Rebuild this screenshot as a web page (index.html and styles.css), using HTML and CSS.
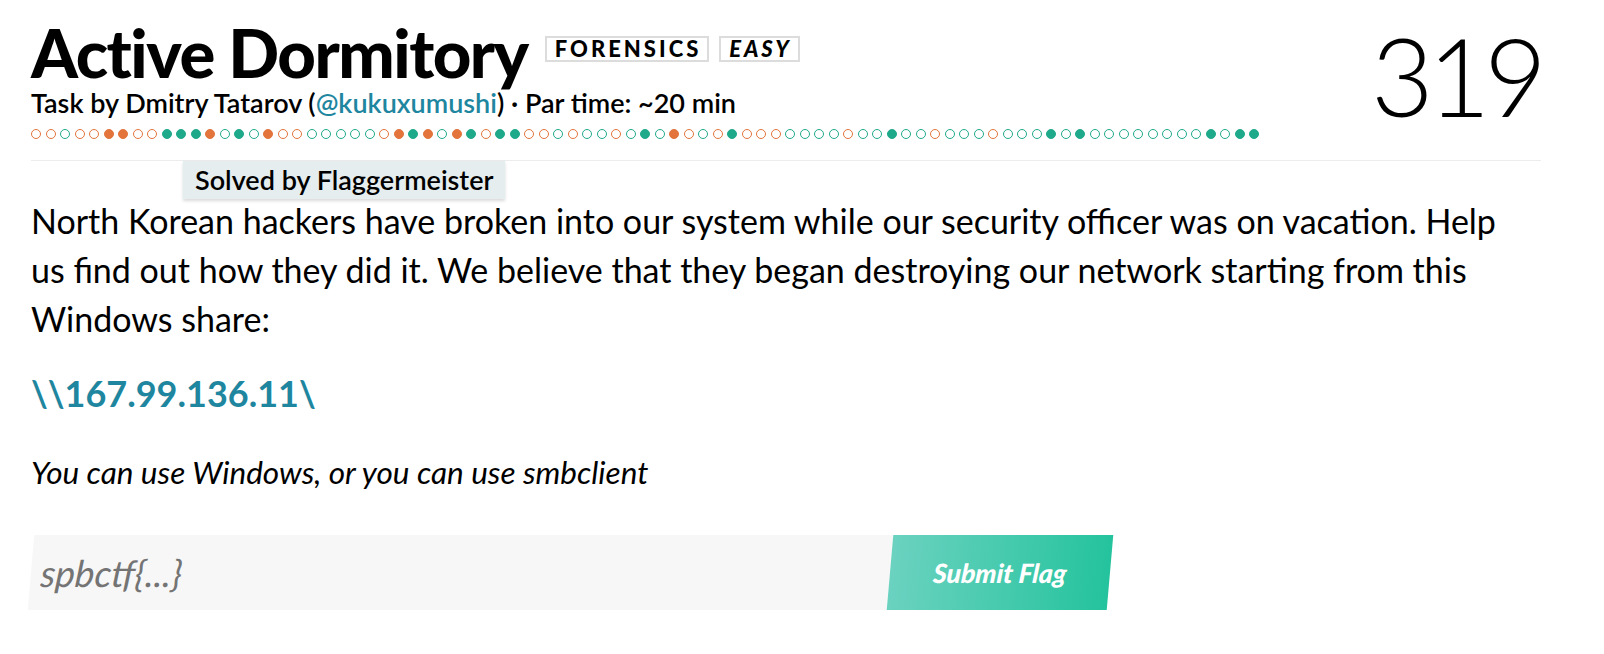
FILE: index.html
```html
<!DOCTYPE html>
<html lang="en">
<head>
<meta charset="utf-8">
<title>Active Dormitory</title>
<link rel="stylesheet" href="styles.css">
</head>
<body>
<div class="page">
  <header class="header">
    <div class="head-main">
      <div class="title-row">
        <h1 class="title">Active Dormitory</h1>
        <span class="tag">FORENSICS</span>
        <span class="tag tag-italic">EASY</span>
      </div>
      <div class="byline">Task by Dmitry Tatarov (<a class="link" href="#">@kukuxumushi</a>) · Par time: ~20 min</div>
      <div class="dots">
        <span class="d o"></span><span class="d o"></span><span class="d t"></span><span class="d o"></span><span class="d o"></span><span class="d O"></span><span class="d O"></span><span class="d o"></span><span class="d o"></span><span class="d T"></span>
        <span class="d T"></span><span class="d T"></span><span class="d O"></span><span class="d t"></span><span class="d T"></span><span class="d t"></span><span class="d O"></span><span class="d o"></span><span class="d o"></span><span class="d t"></span>
        <span class="d t"></span><span class="d t"></span><span class="d t"></span><span class="d t"></span><span class="d o"></span><span class="d O"></span><span class="d T"></span><span class="d O"></span><span class="d t"></span><span class="d O"></span>
        <span class="d T"></span><span class="d o"></span><span class="d T"></span><span class="d T"></span><span class="d o"></span><span class="d o"></span><span class="d t"></span><span class="d o"></span><span class="d t"></span><span class="d t"></span>
        <span class="d o"></span><span class="d t"></span><span class="d T"></span><span class="d t"></span><span class="d O"></span><span class="d o"></span><span class="d t"></span><span class="d o"></span><span class="d T"></span><span class="d o"></span>
        <span class="d o"></span><span class="d o"></span><span class="d t"></span><span class="d t"></span><span class="d t"></span><span class="d t"></span><span class="d o"></span><span class="d t"></span><span class="d t"></span><span class="d T"></span>
        <span class="d t"></span><span class="d t"></span><span class="d o"></span><span class="d t"></span><span class="d t"></span><span class="d t"></span><span class="d o"></span><span class="d t"></span><span class="d t"></span><span class="d t"></span>
        <span class="d T"></span><span class="d t"></span><span class="d T"></span><span class="d t"></span><span class="d t"></span><span class="d t"></span><span class="d t"></span><span class="d t"></span><span class="d t"></span><span class="d t"></span>
        <span class="d t"></span><span class="d T"></span><span class="d t"></span><span class="d T"></span><span class="d T"></span>
      </div>
    </div>
    <div class="points">319</div>
  </header>
  <div class="rule-wrap">
    <hr class="rule">
    <div class="tooltip">Solved by Flaggermeister</div>
  </div>
  <main class="content">
    <p class="desc">North Korean hackers have broken into our system while our security officer was on vacation. Help us find out how they did it. We believe that they began destroying our network starting from this Windows share:</p>
    <p class="share"><a class="link" href="#">\\167.99.136.11\</a></p>
    <p class="hint">You can use Windows, or you can use smbclient</p>
    <form class="flag-form">
      <input class="flag-input" type="text" placeholder="spbctf{...}">
      <button class="flag-btn" type="button">Submit Flag</button>
    </form>
  </main>
</div>
</body>
</html>
```
FILE: styles.css
```css
* { box-sizing: border-box; }
html, body { margin: 0; padding: 0; background: #fff; }
body { font-family: "Lato", "Liberation Sans", sans-serif; color: #000; }

.page { padding: 19px 63px 0 31px; }

.header { display: flex; justify-content: space-between; align-items: flex-start; }
.head-main { display: flex; flex-direction: column; }

.title-row { display: flex; align-items: flex-start; gap: 10px; }
.title { margin: 0 7px 0 0; font-size: 67px; font-weight: 900; line-height: 66px; letter-spacing: -1.5px; }
.tag {
  margin-top: 17px;
  border: 2px solid #dcdcdc;
  padding: 0 6px 0 8px;
  height: 26px;
  line-height: 22px;
  font-size: 22px;
  font-weight: 900;
  letter-spacing: 3px;
}
.tag-italic { font-style: italic; }

.byline { font-size: 27px; font-weight: 600; line-height: 28px; margin-top: 4px; }
.link { color: #1f86a0; text-decoration: none; }

.dots { display: flex; gap: 4.5px; margin-top: 11px; height: 12px; align-items: center; }
.d { width: 10px; height: 10px; border-radius: 50%; flex: none; border: 1.5px solid; }
.o { border-color: #e2743c; }
.t { border-color: #1fa98b; }
.O { border-color: #e2743c; background: #e2743c; }
.T { border-color: #1fa98b; background: #1fa98b; }

.points { font-size: 108px; font-weight: 300; line-height: 1; margin-top: 2px; letter-spacing: -6px; }

.rule-wrap { position: relative; margin-top: 20px; }
.rule { margin: 0; border: 0; border-top: 1px solid #ececec; }
.tooltip {
  position: absolute;
  left: 152px;
  top: 1px;
  background: #e6edef;
  padding: 4px 12px;
  font-size: 27px;
  font-weight: 600;
  line-height: 30px;
  box-shadow: 0 2px 3px rgba(0,0,0,0.15);
}

.content { padding-top: 35px; }
.desc { margin: 0; font-size: 34px; line-height: 49px; max-width: 1480px; }
.share { margin: 30px 0 0; font-size: 36px; font-weight: 700; line-height: 40px; }
.hint { margin: 42px 0 0; font-size: 31.5px; font-style: italic; line-height: 34px; }

.flag-form { display: flex; margin-top: 46px; width: 1079px; transform: skewX(-5deg); }
.flag-input {
  flex: 1;
  height: 75px;
  border: 0;
  background: #f7f7f7;
  padding: 0 10px;
  font-family: inherit;
  font-size: 37px;
  font-style: italic;
  color: #555;
  outline: none;
}
.flag-input::placeholder { color: #747474; }
.flag-btn {
  width: 220px;
  height: 75px;
  border: 0;
  background: linear-gradient(90deg, #6bd2c0, #24c39d);
  color: #fff;
  font-family: inherit;
  font-size: 26.5px;
  font-weight: 900;
  font-style: italic;
}
```
